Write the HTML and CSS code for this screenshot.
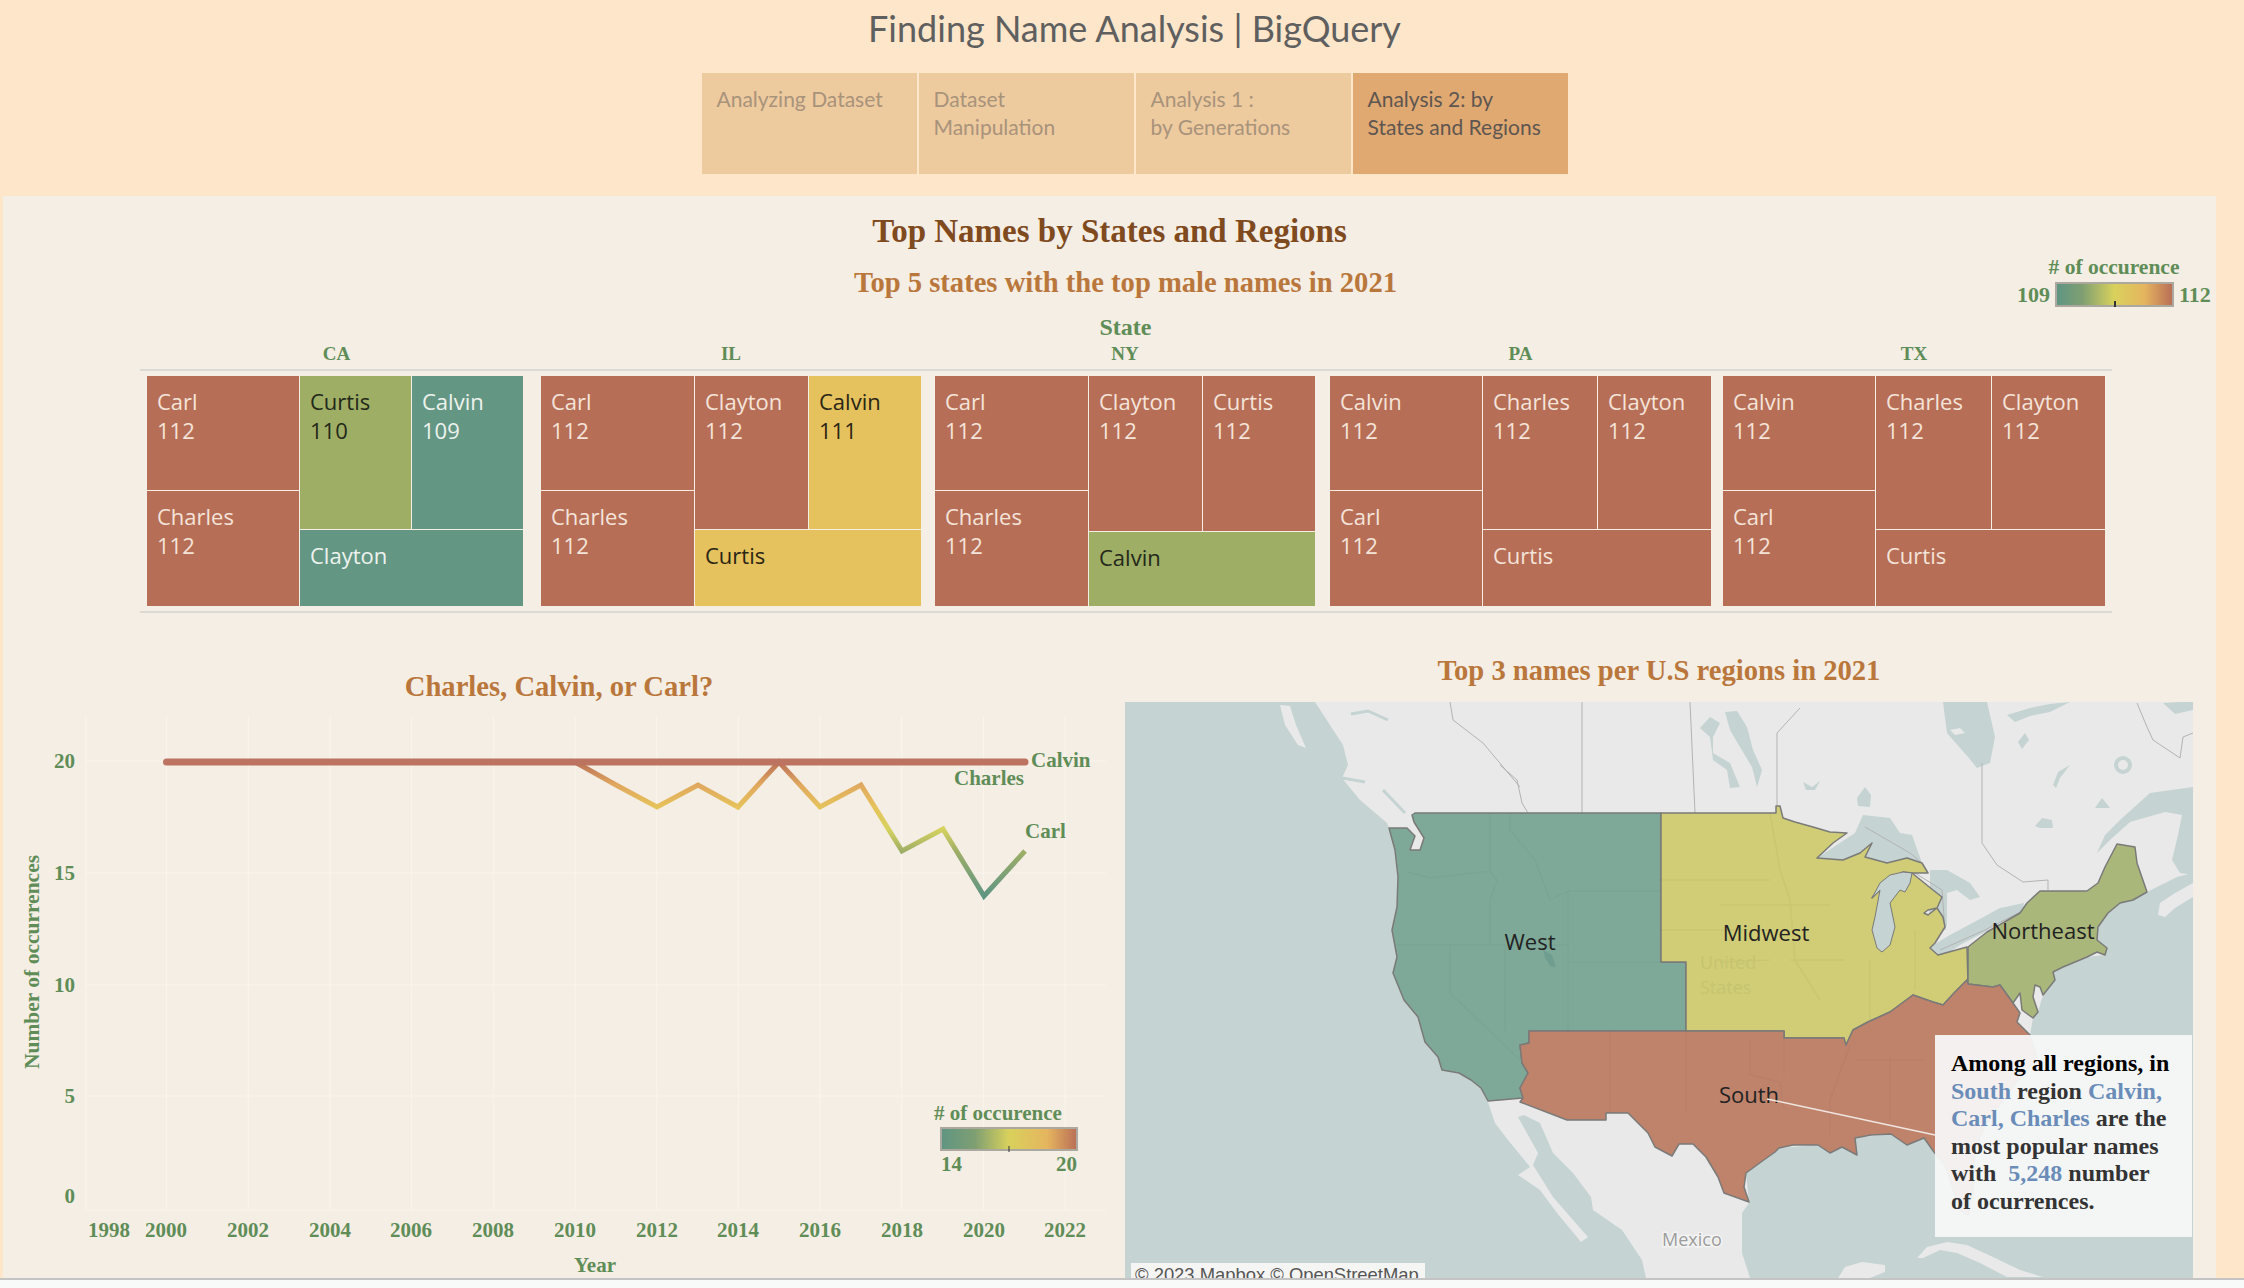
FILE: index.html
```html
<!DOCTYPE html>
<html lang="en">
<head>
<meta charset="utf-8">
<title>Finding Name Analysis | BigQuery</title>
<link rel="stylesheet" href="styles.css">
</head>
<body>
<header class="header">
  <div class="app-title">Finding Name Analysis | BigQuery</div>
  <nav class="tabs">
    <a class="tab">Analyzing Dataset</a>
    <a class="tab">Dataset<br>Manipulation</a>
    <a class="tab">Analysis 1 :<br>by Generations</a>
    <a class="tab tab-active">Analysis 2: by<br>States and Regions</a>
  </nav>
</header>

<main class="panel">
  <h1 class="panel-title">Top Names by States and Regions</h1>
  <h2 class="sub-title">Top 5 states with the top male names in 2021</h2>

  <div class="legend-top">
    <div class="legend-top-title"># of occurence</div>
    <div class="legend-top-row">
      <span>109</span>
      <span class="legend-bar"><i class="legend-tick"></i></span>
      <span>112</span>
    </div>
  </div>

  <div class="state-heading">State</div>
  <div class="state-names">
    <span class="ca">CA</span><span class="il">IL</span><span class="ny">NY</span><span class="pa">PA</span><span class="tx">TX</span>
  </div>
  <section class="treemaps">
    <div class="tree ca">
      <div class="cell a red">Carl<br>112</div>
      <div class="cell b red">Charles<br>112</div>
      <div class="cell c olive">Curtis<br>110</div>
      <div class="cell d teal">Calvin<br>109</div>
      <div class="cell e teal">Clayton</div>
    </div>
    <div class="tree il">
      <div class="cell a red">Carl<br>112</div>
      <div class="cell b red">Charles<br>112</div>
      <div class="cell c red">Clayton<br>112</div>
      <div class="cell d gold">Calvin<br>111</div>
      <div class="cell e gold">Curtis</div>
    </div>
    <div class="tree ny">
      <div class="cell a red">Carl<br>112</div>
      <div class="cell b red">Charles<br>112</div>
      <div class="cell c red">Clayton<br>112</div>
      <div class="cell d red">Curtis<br>112</div>
      <div class="cell e olive">Calvin</div>
    </div>
    <div class="tree pa">
      <div class="cell a red">Calvin<br>112</div>
      <div class="cell b red">Carl<br>112</div>
      <div class="cell c red">Charles<br>112</div>
      <div class="cell d red">Clayton<br>112</div>
      <div class="cell e red">Curtis</div>
    </div>
    <div class="tree tx">
      <div class="cell a red">Calvin<br>112</div>
      <div class="cell b red">Carl<br>112</div>
      <div class="cell c red">Charles<br>112</div>
      <div class="cell d red">Clayton<br>112</div>
      <div class="cell e red">Curtis</div>
    </div>
  </section>

  <section class="lower">
    <div class="chart-col">
      <h2 class="chart-title">Charles, Calvin, or Carl?</h2>
      <svg class="chart" viewBox="3 705 1119 573" width="1119" height="573" role="img" aria-label="Line chart of name occurrences by year">
        <defs>
          <linearGradient id="valueGrad" gradientUnits="userSpaceOnUse" x1="0" y1="762" x2="0" y2="896">
            <stop offset="0" stop-color="#b96f57"/>
            <stop offset="0.17" stop-color="#e0a85f"/>
            <stop offset="0.34" stop-color="#e6c35b"/>
            <stop offset="0.5" stop-color="#d6d25f"/>
            <stop offset="0.67" stop-color="#9dae67"/>
            <stop offset="1" stop-color="#5f9583"/>
          </linearGradient>
          <linearGradient id="legendGrad" x1="0" y1="0" x2="1" y2="0">
            <stop offset="0" stop-color="#5f9583"/>
            <stop offset="0.25" stop-color="#7f9f72"/>
            <stop offset="0.5" stop-color="#d9d15c"/>
            <stop offset="0.78" stop-color="#e5b55f"/>
            <stop offset="1" stop-color="#b96f57"/>
          </linearGradient>
        </defs>
        <g class="grid">
          <path d="M86 716V1210M166.500 716V1210M248.200 716V1210M329.900 716V1210M411.600 716V1210M493.300 716V1210M575 716V1210M656.700 716V1210M738.400 716V1210M820.100 716V1210M901.800 716V1210M983.500 716V1210M1065.200 716V1210"/>
          <path d="M86 761H1106M86 873H1106M86 985H1106M86 1096H1106M86 1210H1106"/>
        </g>
        <polyline class="line-thin" points="575,762 616,785 657,807 698,785 738,807 779,762 820,807 861,785 902,851 943,829 984,896 1025,851"/>
        <line class="line-thick" x1="166.500" y1="762" x2="1025" y2="762"/>
        <g class="axis-y">
          <text x="75" y="768">20</text>
          <text x="75" y="880">15</text>
          <text x="75" y="992">10</text>
          <text x="75" y="1103">5</text>
          <text x="75" y="1203">0</text>
        </g>
        <g class="axis-x">
          <text x="109" y="1237">1998</text>
          <text x="166" y="1237">2000</text>
          <text x="248" y="1237">2002</text>
          <text x="330" y="1237">2004</text>
          <text x="411" y="1237">2006</text>
          <text x="493" y="1237">2008</text>
          <text x="575" y="1237">2010</text>
          <text x="657" y="1237">2012</text>
          <text x="738" y="1237">2014</text>
          <text x="820" y="1237">2016</text>
          <text x="902" y="1237">2018</text>
          <text x="984" y="1237">2020</text>
          <text x="1065" y="1237">2022</text>
          <text x="595" y="1272">Year</text>
        </g>
        <text class="axis-title" transform="translate(39 962) rotate(-90)">Number of occurrences</text>
        <g class="series-label">
          <text x="1031" y="767">Calvin</text>
          <text x="954" y="785">Charles</text>
          <text x="1025" y="838">Carl</text>
        </g>
        <g class="series-label">
          <text x="934" y="1120">&#35; of occurence</text>
          <text x="941" y="1171">14</text>
          <text x="1056" y="1171">20</text>
        </g>
        <rect class="legend-rect" x="941" y="1128" width="136" height="22" fill="url(#legendGrad)"/>
        <line class="legend-mark" x1="1009" y1="1146" x2="1009" y2="1152"/>
      </svg>
    </div>

    <div class="map-col">
      <h2 class="map-title">Top 3 names per U.S regions in 2021</h2>
      <div class="map-wrap">
        <svg class="map" viewBox="1125 702 1068 576" width="1068" height="576" role="img" aria-label="Map of U.S. regions">
          <rect class="water" x="1125" y="702" width="1068" height="576"/>
          <!-- land -->
          <path class="land" d="M1315 702L1330 725 1343 745 1348 765 1342 778 1360 800 1387 823 1389 828 1395 850 1398 877 1397 907 1392 930 1397 957 1393 973 1404 1000 1418 1017 1425 1042 1438 1057 1442 1070 1459 1073 1471 1080 1481 1088 1488 1102 1495 1123 1508 1140 1530 1167 1518 1175 1540 1190 1557 1213 1581 1242 1588 1237 1573 1220 1553 1197 1533 1165 1538 1153 1518 1117 1524 1115 1540 1123 1553 1153 1573 1173 1591 1197 1593 1210 1622 1230 1642 1260 1646 1278 1750 1278 1742 1253 1742 1213 1749 1203 1746 1173 1761 1162 1779 1148 1818 1145 1842 1147 1857 1155 1855 1138 1891 1134 1907 1145 1924 1138 1934 1152 1945 1165 1960 1210 1968 1215 1973 1190 1975 1150 1985 1125 2013 1087 2037 1057 2030 1035 2033 1018 2038 1012 2043 995 2055 980 2053 972 2063 967 2087 957 2105 955 2107 948 2097 940 2098 927 2108 913 2120 903 2133 900 2147 892 2177 877 2193 873 2193 702Z"/>
          <path class="land" d="M1280 705L1290 706 1296 725 1306 748 1298 745 1285 725Z"/>
          <path class="land" d="M2158 915L2160 903 2175 893 2193 883 2193 897 2175 908 2165 917Z"/>
          <path class="land" d="M1917 1258L1927 1247 1947 1242 1967 1245 1993 1257 2020 1270 2043 1277 2007 1277 1980 1263 1957 1253 1940 1250 1923 1258Z"/>
          <path class="land" d="M1838 1278L1845 1267 1862 1262 1885 1265 1885 1272 1870 1278Z"/>
          <!-- water features -->
          <path class="water" d="M2097 853L2105 835 2120 820 2150 793 2193 787 2193 875 2180 873 2172 860 2178 835 2182 815 2165 812 2130 822 2110 840Z"/>
          <path class="water" d="M1725 712L1737 711 1747 727 1753 750 1762 770 1757 787 1752 767 1740 747 1730 730Z"/>
          <path class="water" d="M1700 728L1710 717 1720 723 1713 737 1713 753 1730 763 1740 787 1730 788 1727 770 1713 760 1710 737Z"/>
          <path class="water" d="M1943 702L1987 702 1995 737 1990 763 1977 768 1968 757 1947 733Z"/>
          <path class="land" d="M1950 730L1960 728 1965 733 1955 735Z"/>
          <path class="water" d="M2007 715L2030 708 2050 704 2070 702 2050 712 2030 716 2015 722Z"/>
          <path class="water" d="M2018 742L2025 733 2029 740 2022 749Z"/>
          <path class="water" d="M2163 703L2180 702 2193 702 2193 710 2175 714Z"/>
          <path class="water" d="M1857 798L1865 787 1871 795 1870 807 1858 806Z"/>
          <path class="water" d="M1803 782L1812 787 1820 781 1815 790 1806 790Z"/>
          <path class="water" d="M2035 826L2042 818 2052 820 2053 828 2040 828Z"/>
          <path class="water" d="M2053 785L2058 772 2070 765 2060 778 2056 788Z"/>
          <path class="water" d="M2095 808L2102 798 2110 808 2100 808Z"/>
          <path class="water-line" d="M1351 714L1368 711 1388 720M1342 778L1365 782M1383 790L1405 813"/>
          <circle class="water-ring" cx="2123" cy="765" r="7"/>
          <path class="water" d="M1855 833L1863 815 1890 818 1900 833 1912 835 1922 863 1907 858 1887 863 1865 857 1872 843 1860 853 1843 860 1817 858Z"/>
          <path class="water" d="M1930 870L1947 870 1970 883 1980 897 1970 900 1957 890 1947 893 1947 925 1935 943 1925 945 1930 905Z"/>
          <path class="water" d="M1930 947L1950 935 1978 920 2000 908 2024 903 2022 915 2000 922 1985 932 1960 945 1942 957Z"/>
          <!-- borders in Canada -->
          <path class="border" d="M1582 702V813M1690 702L1695 813M1500 765L1517 780 1522 803 1528 813M1450 702L1453 720 1483 743 1520 787M1800 708L1777 733V807M1982 763V843L1997 865 2023 882 2048 880V890M2137 703L2147 727 2153 740 2180 758 2183 737 2193 733M1865 827L1910 853 1922 863M1915 873L1942 890 1945 930M1940 950L1985 930 2024 910"/>
          <!-- regions -->
          <path class="region west" d="M1415 813H1661V962H1686V1031H1529V1043L1520 1045 1522 1063 1528 1073 1520 1088 1523 1098 1488 1101 1481 1088 1471 1080 1459 1073 1442 1070 1438 1057 1425 1042 1418 1017 1404 1000 1393 973 1397 957 1392 930 1397 907 1398 877 1395 850 1389 828 1407 828 1415 836 1410 850 1420 850 1424 838 1414 822 1412 815Z"/>
          <path class="region midwest" d="M1661 813H1776V806H1780L1783 818 1795 822 1813 827 1830 832 1847 833 1833 843 1817 858 1843 860 1860 853 1872 843 1865 857 1887 863 1907 858 1922 863 1928 873 1913 873 1903 872 1883 883 1872 898 1890 880 1912 873 1933 890 1942 897 1937 908 1928 910 1924 913 1928 915 1937 908 1943 917 1945 927 1935 943 1930 948 1938 955 1967 947 1968 984 1967 980 1955 992 1943 1005 1933 1002 1913 995 1890 1012 1868 1022 1853 1030 1846 1045 1843 1045 1844 1038H1784V1031H1686V962H1661Z"/>
          <path class="region northeast" d="M1968 947L1987 932 2020 913 2027 903 2040 891H2087L2098 883 2105 867 2117 844 2135 847 2137 863 2147 892 2133 900 2120 903 2108 913 2098 927 2097 940 2107 948 2105 955 2097 952 2087 957 2063 967 2053 972 2055 980 2043 995 2040 987 2035 985 2033 997 2038 1012 2033 1018 2022 1010 2020 993 2013 1003 2000 985 1993 987 1968 984Z"/>
          <path class="region south" d="M1529 1031H1784V1038H1844L1846 1045 1853 1030 1868 1022 1890 1012 1913 995 1933 1002 1943 1005 1955 992 1967 980 1968 984 1993 987 2000 985 2013 1003 2020 1013 2017 1022 2030 1035 2037 1057 2013 1087 1985 1125 1975 1150 1973 1190 1968 1215 1960 1210 1945 1165 1934 1152 1924 1138 1907 1145 1891 1134 1871 1135 1855 1138 1857 1155 1842 1147 1830 1153 1818 1145 1793 1145 1779 1148 1775 1152 1761 1162 1746 1173 1744 1187 1749 1202 1724 1193 1718 1177 1706 1157 1693 1144H1679L1672 1156 1655 1147 1648 1133 1628 1113H1606V1120H1567L1520 1102 1523 1098 1520 1088 1528 1073 1522 1063 1520 1045 1529 1043Z"/>
          <!-- Lake Michigan lies on top of the Midwest fill -->
          <path class="lake" d="M1903 872L1912 873 1910 883 1905 892 1900 890 1890 903 1895 927 1890 945 1882 952 1877 948 1872 930 1875 917 1880 890 1872 898 1880 883 1890 875Z"/>
          <!-- faint state lines -->
          <path class="state-lines" d="M1397 945H1570M1450 945V993L1520 1060M1408 872L1430 878 1490 871 1497 880 1490 900V945M1490 813V870M1510 813V830L1535 860 1550 900 1568 891H1661M1568 891V962H1661M1505 945V1031M1568 962V1031M1610 1031V1113M1686 1031V1113M1750 1038V1075L1780 1082 1784 1110M1784 1038V1075M1850 1045L1830 1100 1830 1135M1890 1055V1120M1855 1060L1925 1060M1720 905H1830M1660 880H1770M1660 930H1770M1770 813L1780 870 1790 900 1795 960 1820 1000M1870 960V1020M1915 930V990M1790 960H1845M1720 962L1770 960"/>
          <path class="lake-dark" d="M1543 950L1552 955 1556 967 1550 966 1545 958Z"/>
          <text class="map-faint" x="1700" y="969">United</text>
          <text class="map-faint" x="1700" y="994">States</text>
          <text class="map-label" x="1530" y="950">West</text>
          <text class="map-label" x="1766" y="941">Midwest</text>
          <text class="map-label" x="2043" y="939">Northeast</text>
          <text class="map-label" x="1749" y="1103">South</text>
          <text class="map-muted" x="1662" y="1246">Mexico</text>
          <line class="leader" x1="1767" y1="1099" x2="1935" y2="1135"/>
        </svg>
        <div class="attribution">© 2023 Mapbox © OpenStreetMap</div>
        <aside class="callout">
          <b class="callout-lead">Among all regions, in</b><br>
          <b class="hl">South</b> region <b class="hl">Calvin,</b><br>
          <b class="hl">Carl, Charles</b> are the<br>
          most popular names<br>
          with&nbsp; <b class="hl">5,248</b> number<br>
          of ocurrences.
        </aside>
      </div>
    </div>
  </section>
</main>
<footer class="footer"></footer>
</body>
</html>
```

FILE: styles.css
```css
* { box-sizing: border-box; }
html, body { margin: 0; padding: 0; }
body {
  width: 2244px;
  height: 1288px;
  overflow: hidden;
  background: #fde6ca;
  font-family: "Liberation Serif", serif;
}

/* header */
.header { padding-left: 25px; height: 196px; }
.app-title {
  height: 56px;
  line-height: 56px;
  text-align: center;
  font-family: Lato, sans-serif;
  font-size: 36px;
  color: #5f5f5f;
}
.tabs {
  margin-top: 17px;
  display: flex;
  justify-content: center;
  gap: 2px;
}
.tab {
  width: 215px;
  height: 101px;
  padding: 12px 15px 0;
  background: #eeca9f;
  font-family: Lato, sans-serif;
  font-size: 21px;
  line-height: 28px;
  color: #a8937b;
}
.tab-active { background: #e1a972; color: #5e5650; }

/* panel */
.panel {
  position: relative;
  width: 2213px;
  height: 1082px;
  margin-left: 3px;
  background: #f5eee4;
  overflow: hidden;
}
.panel-title {
  margin: 15px 0 0;
  line-height: 40px;
  text-align: center;
  font-size: 33px;
  font-weight: 700;
  color: #7f4a1e;
}
.sub-title {
  margin: 14px 0 0;
  padding-left: 32px;
  line-height: 36px;
  text-align: center;
  font-size: 28.600px;
  font-weight: 700;
  color: #b9773c;
}

/* legend over the panel */
.legend-top {
  position: absolute;
  top: 59px;
  left: 2014px;
  width: 196px;
  color: #5f8d57;
  font-weight: 700;
}
.legend-top-title { text-align: center; font-size: 21.500px; line-height: 24px; padding-right: 2px; }
.legend-top-row {
  display: flex;
  align-items: center;
  gap: 5px;
  font-size: 22px;
  line-height: 24px;
  margin-top: 3px;
}
.legend-bar {
  position: relative;
  width: 119px;
  height: 25px;
  border: 2px solid #aaa89f;
  background: linear-gradient(90deg, #5f9583 0%, #7f9f72 22%, #d9d15c 50%, #e5b55f 76%, #b96f57 100%);
}
.legend-tick {
  position: absolute;
  left: 57px;
  bottom: -2px;
  width: 2px;
  height: 6px;
  background: #333;
}

/* treemaps */
.state-heading {
  margin: 14px 0 0;
  padding-left: 32px;
  text-align: center;
  font-size: 24px;
  font-weight: 700;
  line-height: 24px;
  color: #5f8d57;
}
.state-names {
  display: flex;
  margin: 5px 0 0 137px;
  padding: 0 7px;
  width: 1972px;
  height: 20px;
  line-height: 20px;
  text-align: center;
  font-size: 19px;
  font-weight: 700;
  color: #5f8d57;
}
.state-names .ca { padding-left: 3px; }
.treemaps {
  display: flex;
  margin: 5px 0 0 137px;
  width: 1972px;
  height: 244px;
  padding: 5px 7px;
  border-top: 2px solid #dcdad4;
  border-bottom: 2px solid #dcdad4;
}
.ca { width: 376px; }
.il { width: 380px; margin-left: 18px; }
.ny { width: 380px; margin-left: 14px; }
.pa { width: 381px; margin-left: 15px; }
.tx { width: 382px; margin-left: 12px; }

.tree {
  display: grid;
  height: 230px;
  gap: 1px;
  grid-template-rows: 114px 38px 76px;
  font-family: "Open Sans", sans-serif;
}
.tree.ca { grid-template-columns: 152px 111px 111px; }
.tree.il { grid-template-columns: 153px 113px 112px; }
.tree.ny { grid-template-columns: 153px 113px 112px; grid-template-rows: 114px 40px 74px; }
.tree.pa { grid-template-columns: 152px 114px 113px; }
.tree.tx { grid-template-columns: 152px 115px 113px; }
.cell {
  padding: 11px 10px 0;
  font-size: 22px;
  line-height: 29px;
  white-space: nowrap;
  overflow: hidden;
}
.a { grid-column: 1; grid-row: 1; }
.b { grid-column: 1; grid-row: 2 / 4; }
.c { grid-column: 2; grid-row: 1 / 3; }
.d { grid-column: 3; grid-row: 1 / 3; }
.e { grid-column: 2 / 4; grid-row: 3; }
.red { background: #b76e56; color: #f4e4da; }
.teal { background: #649684; color: #eef3ee; }
.olive { background: #9fae65; color: #23281a; }
.gold { background: #e5c25e; color: #2a2514; }

/* lower row */
.lower { display: flex; }
.chart-col { width: 1119px; }
.map-col { width: 1094px; }
.chart-title, .map-title {
  margin: 0;
  line-height: 36px;
  text-align: center;
  font-size: 28.600px;
  font-weight: 700;
  color: #b9773c;
}
.chart-title { margin-top: 56px; padding-right: 7px; }
.chart { display: block; }
.map-title { margin-top: 40px; padding-right: 20px; }
.map-wrap { position: relative; width: 1068px; height: 576px; margin: 13px 0 0 3px; overflow: hidden; }
.map { display: block; }

/* chart */
.grid path { stroke: #f9f5ee; stroke-width: 1; fill: none; }
.line-thick { stroke: #bc7460; stroke-width: 7; stroke-linecap: round; }
.line-thin { fill: none; stroke: url(#valueGrad); stroke-width: 5; stroke-linejoin: miter; }
.axis-y text { text-anchor: end; }
.axis-x text { text-anchor: middle; }
.axis-y text, .axis-x text, .series-label text, .axis-title {
  font-family: "Liberation Serif", serif;
  font-size: 21px;
  font-weight: 700;
  fill: #5f8d57;
}
.series-label text { font-size: 21px; }
.axis-title { text-anchor: middle; font-size: 21.500px; }
.legend-rect { stroke: #aaa89f; stroke-width: 2; }
.legend-mark { stroke: #333; stroke-width: 1; }

/* map */
.water { fill: #c5d3d3; }
.land { fill: #e9e9e9; }
.water-line { fill: none; stroke: #c5d3d3; stroke-width: 3; }
.water-ring { fill: none; stroke: #c5d3d3; stroke-width: 4; }
.border { fill: none; stroke: #b3b3b3; stroke-width: 1; }
.region { stroke: #7a7a78; stroke-width: 1.500; stroke-linejoin: round; }
.lake { fill: #c5d3d3; stroke: #7a7a78; stroke-width: 1; stroke-linejoin: round; }
.west { fill: #7ea998; }
.midwest { fill: #d0cd76; }
.northeast { fill: #aab77b; }
.south { fill: #bf836c; }
.state-lines { fill: none; stroke: rgba(60, 60, 40, 0.04); stroke-width: 1.500; }
.lake-dark { fill: #6f9e90; }
.map-label, .map-faint, .map-muted { font-family: "Open Sans", sans-serif; font-size: 22px; }
.map-label { text-anchor: middle; fill: #222; }
.map-faint { fill: #c6c470; font-size: 18px; }
.map-muted { fill: #9c9c9c; font-size: 18px; paint-order: stroke; stroke: #f4f4f4; stroke-width: 3px; }
.leader { stroke: #efe6e0; stroke-width: 1.500; }

.attribution {
  position: absolute;
  left: 6px;
  top: 561px;
  width: 294px;
  height: 24px;
  padding-left: 4px;
  background: #f5f5f4;
  font-family: "Liberation Sans", sans-serif;
  font-size: 18.400px;
  line-height: 24px;
  color: #555;
  white-space: nowrap;
}
.callout {
  position: absolute;
  left: 810px;
  top: 333px;
  width: 257px;
  height: 202px;
  padding: 15px 0 0 16px;
  background: rgba(248, 249, 249, 0.93);
  font-size: 24px;
  font-weight: 700;
  line-height: 27.600px;
  color: #333;
  white-space: nowrap;
}
.callout-lead { color: #000; }
.hl { color: #6a8cb8; }

.footer {
  height: 10px;
  background: #f8fafa;
  border-top: 2px solid #c4c4c4;
}
```
